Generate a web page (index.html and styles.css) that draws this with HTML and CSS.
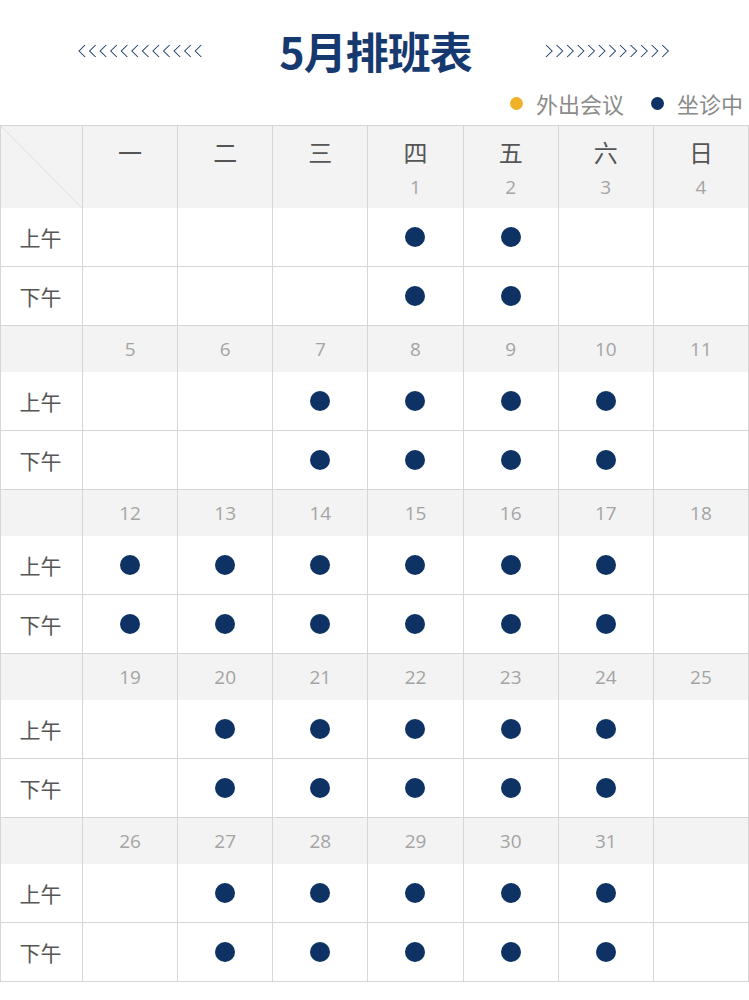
FILE: index.html
```html
<!DOCTYPE html>
<html lang="zh">
<head>
<meta charset="utf-8">
<title>5月排班表</title>
<link rel="stylesheet" href="styles.css">
</head>
<body>
<div class="page">
  <header class="head">
    <svg class="chev" width="128" height="14" viewBox="0 0 126 14" preserveAspectRatio="none">
      <path d="M7 1 L1 7 L7 13 M17.4 1 L11.4 7 L17.4 13 M27.8 1 L21.8 7 L27.8 13 M38.2 1 L32.2 7 L38.2 13 M48.6 1 L42.6 7 L48.6 13 M59 1 L53 7 L59 13 M69.4 1 L63.4 7 L69.4 13 M79.8 1 L73.8 7 L79.8 13 M90.2 1 L84.2 7 L90.2 13 M100.6 1 L94.6 7 L100.6 13 M111 1 L105 7 L111 13 M121.4 1 L115.4 7 L121.4 13"/>
    </svg>
    <h1 class="title">5月排班表</h1>
    <svg class="chev" width="128" height="14" viewBox="0 0 126 14" preserveAspectRatio="none">
      <path d="M1 1 L7 7 L1 13 M11.4 1 L17.4 7 L11.4 13 M21.8 1 L27.8 7 L21.8 13 M32.2 1 L38.2 7 L32.2 13 M42.6 1 L48.6 7 L42.6 13 M53 1 L59 7 L53 13 M63.4 1 L69.4 7 L63.4 13 M73.8 1 L79.8 7 L73.8 13 M84.2 1 L90.2 7 L84.2 13 M94.6 1 L100.6 7 L94.6 13 M105 1 L111 7 L105 13 M115.4 1 L121.4 7 L115.4 13"/>
    </svg>
  </header>
  <div class="legend">
    <span class="leg"><i class="dot dot-yellow"></i>外出会议</span>
    <span class="leg"><i class="dot dot-navy"></i>坐诊中</span>
  </div>

  <div class="table">
    <div class="row row-head">
      <div class="cell corner"></div>
      <div class="cell"><span class="wd">一</span><span class="dn"></span></div>
      <div class="cell"><span class="wd">二</span><span class="dn"></span></div>
      <div class="cell"><span class="wd">三</span><span class="dn"></span></div>
      <div class="cell"><span class="wd">四</span><span class="dn">1</span></div>
      <div class="cell"><span class="wd">五</span><span class="dn">2</span></div>
      <div class="cell"><span class="wd">六</span><span class="dn">3</span></div>
      <div class="cell"><span class="wd">日</span><span class="dn">4</span></div>
    </div>
    <div class="row row-slot">
      <div class="cell lbl">上午</div>
      <div class="cell"></div><div class="cell"></div><div class="cell"></div>
      <div class="cell"><i class="dot"></i></div><div class="cell"><i class="dot"></i></div>
      <div class="cell"></div><div class="cell"></div>
    </div>
    <div class="row row-slot">
      <div class="cell lbl">下午</div>
      <div class="cell"></div><div class="cell"></div><div class="cell"></div>
      <div class="cell"><i class="dot"></i></div><div class="cell"><i class="dot"></i></div>
      <div class="cell"></div><div class="cell"></div>
    </div>

    <div class="row row-date">
      <div class="cell"></div>
      <div class="cell">5</div><div class="cell">6</div><div class="cell">7</div><div class="cell">8</div>
      <div class="cell">9</div><div class="cell">10</div><div class="cell">11</div>
    </div>
    <div class="row row-slot">
      <div class="cell lbl">上午</div>
      <div class="cell"></div><div class="cell"></div>
      <div class="cell"><i class="dot"></i></div><div class="cell"><i class="dot"></i></div>
      <div class="cell"><i class="dot"></i></div><div class="cell"><i class="dot"></i></div>
      <div class="cell"></div>
    </div>
    <div class="row row-slot">
      <div class="cell lbl">下午</div>
      <div class="cell"></div><div class="cell"></div>
      <div class="cell"><i class="dot"></i></div><div class="cell"><i class="dot"></i></div>
      <div class="cell"><i class="dot"></i></div><div class="cell"><i class="dot"></i></div>
      <div class="cell"></div>
    </div>

    <div class="row row-date">
      <div class="cell"></div>
      <div class="cell">12</div><div class="cell">13</div><div class="cell">14</div><div class="cell">15</div>
      <div class="cell">16</div><div class="cell">17</div><div class="cell">18</div>
    </div>
    <div class="row row-slot">
      <div class="cell lbl">上午</div>
      <div class="cell"><i class="dot"></i></div><div class="cell"><i class="dot"></i></div>
      <div class="cell"><i class="dot"></i></div><div class="cell"><i class="dot"></i></div>
      <div class="cell"><i class="dot"></i></div><div class="cell"><i class="dot"></i></div>
      <div class="cell"></div>
    </div>
    <div class="row row-slot">
      <div class="cell lbl">下午</div>
      <div class="cell"><i class="dot"></i></div><div class="cell"><i class="dot"></i></div>
      <div class="cell"><i class="dot"></i></div><div class="cell"><i class="dot"></i></div>
      <div class="cell"><i class="dot"></i></div><div class="cell"><i class="dot"></i></div>
      <div class="cell"></div>
    </div>

    <div class="row row-date">
      <div class="cell"></div>
      <div class="cell">19</div><div class="cell">20</div><div class="cell">21</div><div class="cell">22</div>
      <div class="cell">23</div><div class="cell">24</div><div class="cell">25</div>
    </div>
    <div class="row row-slot">
      <div class="cell lbl">上午</div>
      <div class="cell"></div><div class="cell"><i class="dot"></i></div>
      <div class="cell"><i class="dot"></i></div><div class="cell"><i class="dot"></i></div>
      <div class="cell"><i class="dot"></i></div><div class="cell"><i class="dot"></i></div>
      <div class="cell"></div>
    </div>
    <div class="row row-slot">
      <div class="cell lbl">下午</div>
      <div class="cell"></div><div class="cell"><i class="dot"></i></div>
      <div class="cell"><i class="dot"></i></div><div class="cell"><i class="dot"></i></div>
      <div class="cell"><i class="dot"></i></div><div class="cell"><i class="dot"></i></div>
      <div class="cell"></div>
    </div>

    <div class="row row-date">
      <div class="cell"></div>
      <div class="cell">26</div><div class="cell">27</div><div class="cell">28</div><div class="cell">29</div>
      <div class="cell">30</div><div class="cell">31</div><div class="cell"></div>
    </div>
    <div class="row row-slot">
      <div class="cell lbl">上午</div>
      <div class="cell"></div><div class="cell"><i class="dot"></i></div>
      <div class="cell"><i class="dot"></i></div><div class="cell"><i class="dot"></i></div>
      <div class="cell"><i class="dot"></i></div><div class="cell"><i class="dot"></i></div>
      <div class="cell"></div>
    </div>
    <div class="row row-slot">
      <div class="cell lbl">下午</div>
      <div class="cell"></div><div class="cell"><i class="dot"></i></div>
      <div class="cell"><i class="dot"></i></div><div class="cell"><i class="dot"></i></div>
      <div class="cell"><i class="dot"></i></div><div class="cell"><i class="dot"></i></div>
      <div class="cell"></div>
    </div>
  </div>
</div>
</body>
</html>
```

FILE: styles.css
```css
* { box-sizing: border-box; }
html, body { margin: 0; padding: 0; background: #fff; }
body {
  font-family: "Noto Sans CJK SC", "Open Sans", sans-serif;
  width: 749px;
}
.page { width: 749px; }

.head {
  height: 88px;
  display: flex;
  align-items: center;
  justify-content: center;
  gap: 73px;
  padding-top: 12px;
  padding-left: 2px;
}
.chev { display: block; margin-top: 2px; }
.chev path {
  fill: none;
  stroke: #1c3a6b;
  stroke-width: 1;
}
.title {
  margin: 0;
  font-size: 43px;
  line-height: 46px;
  font-weight: 700;
  color: #163a70;
  letter-spacing: -1px;
}

.legend {
  height: 37px;
  display: flex;
  justify-content: flex-end;
  align-items: flex-start;
  gap: 27px;
  padding-right: 6px;
  padding-top: 1px;
}
.leg {
  display: flex;
  align-items: center;
  gap: 13px;
  font-size: 22px;
  line-height: 28px;
  color: #8a8a8a;
}
.legend .dot { width: 13px; height: 13px; }
.dot {
  display: block;
  width: 20px;
  height: 20px;
  border-radius: 50%;
  background: #0d3263;
}
.dot-yellow { background: #f0b12a; }
.dot-navy { background: #0d3263; }

.table {
  width: 749px;
  border-top: 1px solid #d6d6d6;
  border-left: 1px solid #d6d6d6;
}
.row {
  display: grid;
  grid-template-columns: 82px repeat(7, 1fr);
}
.cell {
  border-right: 1px solid #d6d6d6;
  display: flex;
  align-items: center;
  justify-content: center;
}
.row-head { height: 82px; background: #f3f3f3; }
.row-head .cell {
  flex-direction: column;
  justify-content: flex-start;
  padding-top: 11px;
}
.wd {
  font-size: 24px;
  line-height: 30px;
  color: #555;
}
.dn {
  font-family: "Open Sans", sans-serif;
  font-size: 19px;
  line-height: 24px;
  margin-top: 8px;
  color: #a4a4a4;
}
.corner {
  background: linear-gradient(to top right, transparent calc(50% - 0.7px), #dedede 50%, transparent calc(50% + 0.7px));
}
.row-date {
  height: 46px;
  background: #f3f3f3;
  font-family: "Open Sans", sans-serif;
  font-size: 19px;
  color: #a4a4a4;
}
.row-slot {
  height: 59px;
  border-bottom: 1px solid #d6d6d6;
}
.lbl {
  font-size: 21px;
  color: #555;
  padding-right: 2px;
}
```
